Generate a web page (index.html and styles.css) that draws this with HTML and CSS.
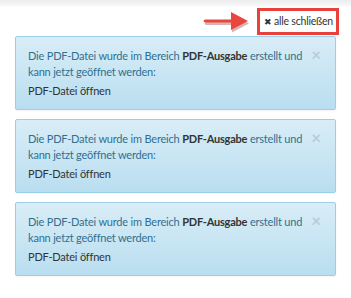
FILE: index.html
```html
<!DOCTYPE html>
<html lang="de">
<head>
  <meta charset="UTF-8">
  <title>Meldungen</title>
  <link rel="stylesheet" href="styles.css">
</head>
<body>
<div class="topshade"></div>

<div class="toolbar">
  <svg class="pointer" width="50" height="24" viewBox="0 0 50 24">
    <path d="M4 10.5 H30 V3 L47 12 L30 21 V13.5 H4 Q1 12 4 10.5 Z" fill="#8a2a24" opacity="0.35" transform="translate(1,1.5)"/>
    <path d="M4 9.5 H30 V2 L47 11 L30 20 V12.5 H4 Q1 11 4 9.5 Z" fill="#e8463e"/>
  </svg>
  <a class="closeall" href="#"><span class="x">&#x2716;</span> alle schließen</a>
</div>

<div class="alerts">
  <div class="alert">
    <span class="dismiss">&times;</span>
    <p>Die PDF-Datei wurde im Bereich <b>PDF-Ausgabe</b> erstellt und kann jetzt geöffnet werden:</p>
    <a href="#">PDF-Datei öffnen</a>
  </div>
  <div class="alert">
    <span class="dismiss">&times;</span>
    <p>Die PDF-Datei wurde im Bereich <b>PDF-Ausgabe</b> erstellt und kann jetzt geöffnet werden:</p>
    <a href="#">PDF-Datei öffnen</a>
  </div>
  <div class="alert">
    <span class="dismiss">&times;</span>
    <p>Die PDF-Datei wurde im Bereich <b>PDF-Ausgabe</b> erstellt und kann jetzt geöffnet werden:</p>
    <a href="#">PDF-Datei öffnen</a>
  </div>
</div>
</body>
</html>
```

FILE: styles.css
```css
body { margin: 0; background: #fff; font-family: Lato, "Noto Sans", sans-serif; font-size: 11px; letter-spacing: -0.2px; color: #333; }
.topshade { height: 7px; background: linear-gradient(#ececec, #fbfbfb); }
.toolbar { display: flex; justify-content: flex-end; align-items: center; height: 29px; padding-right: 12px; }
.pointer { margin-right: 6px; }
.closeall { display: block; border: 3px solid #e8403b; padding: 2px 3px 2px 4px; color: #333; text-decoration: none; font-size: 10.5px; line-height: 16px; }
.closeall .x { font-size: 9px; }
.alerts { padding: 0 15px; }
.alert { position: relative; border: 1px solid #9acfea; border-radius: 2px; background: linear-gradient(#d9edf7, #b9def0); color: #31708f; padding: 11px 30px 10px 12px; margin-bottom: 9px; box-shadow: 0 1px 2px rgba(0,0,0,0.05); }
.alert p { margin: 0 0 3px; line-height: 16px; }
.alert b { color: #333; }
.alert a { display: block; color: #333; text-decoration: none; line-height: 16px; }
.dismiss { position: absolute; top: 7px; right: 14px; font-size: 17px; font-weight: bold; color: #000; opacity: 0.12; letter-spacing: 0; }
```
